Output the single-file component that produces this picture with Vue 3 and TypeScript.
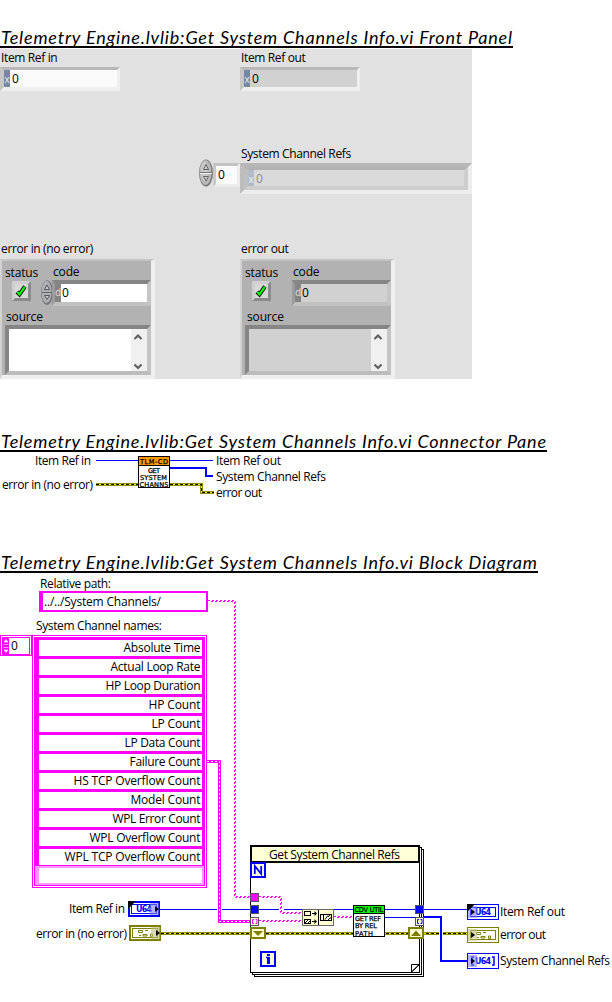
<script setup lang="ts">
interface Cluster { title: string; editable: boolean }
interface Label { x: number; y: number; w: number; text: string }
interface Wire { kind: 'ref' | 'thick' | 'str' | 'arr' | 'err'; d: string }
interface Terminal { x: number; y: number; kind: 'U64' | '[U64]' | 'err'; input: boolean; corner: boolean }

const prefix = 'Telemetry Engine.lvlib:Get System Channels Info.vi '
const headings = [
  { text: prefix + 'Front Panel', width: 512 },
  { text: prefix + 'Connector Pane', width: 546 },
  { text: prefix + 'Block Diagram', width: 537 },
]

const clusters: Cluster[] = [
  { title: 'error in (no error)', editable: true },
  { title: 'error out', editable: false },
]

const paneWires: Wire[] = [
  { kind: 'ref', d: 'M96 8.5H213' },
  { kind: 'thick', d: 'M170 16H206V24H213' },
  { kind: 'err', d: 'M96 32.5H138' },
  { kind: 'err', d: 'M170 32.5H201.5V40.5H214' },
]
const paneLabels: Label[] = [
  { x: 35, y: 13, w: 56, text: 'Item Ref in' },
  { x: 2, y: 37, w: 91, text: 'error in (no error)' },
  { x: 216, y: 13, w: 65, text: 'Item Ref out' },
  { x: 216, y: 29, w: 110, text: 'System Channel Refs' },
  { x: 216, y: 45, w: 46, text: 'error out' },
]

const channels = [
  { text: 'Absolute Time', w: 77 },
  { text: 'Actual Loop Rate', w: 90 },
  { text: 'HP Loop Duration', w: 95 },
  { text: 'HP Count', w: 52 },
  { text: 'LP Count', w: 49 },
  { text: 'LP Data Count', w: 76 },
  { text: 'Failure Count', w: 71 },
  { text: 'HS TCP Overflow Count', w: 127 },
  { text: 'Model Count', w: 70 },
  { text: 'WPL Error Count', w: 88 },
  { text: 'WPL Overflow Count', w: 111 },
  { text: 'WPL TCP Overflow Count', w: 136 },
]

const wires: Wire[] = [
  { kind: 'str', d: 'M208 27.5H234.5V323.5H250' },
  { kind: 'arr', d: 'M207 188.5H219.5V348.5H250' },
  { kind: 'ref', d: 'M160 336.5H217M222 336.5H279M284 336.5H468' },
  { kind: 'ref', d: 'M385 344.5H415' },
  { kind: 'thick', d: 'M424 344H441V388H467' },
  { kind: 'str', d: 'M259 323.5H280.5V339.5H302' },
  { kind: 'str', d: 'M259 347.5H302' },
  { kind: 'str', d: 'M334 343.5H353' },
  { kind: 'err', d: 'M161 360.5H439' },
  { kind: 'err', d: 'M443 360.5H467' },
]
const labels: Label[] = [
  { x: 40, y: 14.5, w: 71, text: 'Relative path:' },
  { x: 44, y: 32.5, w: 117, text: '../../System Channels/' },
  { x: 36, y: 57, w: 126, text: 'System Channel names:' },
  { x: 11, y: 77, w: 6, text: '0' },
  { x: 69, y: 340, w: 56, text: 'Item Ref in' },
  { x: 36, y: 365, w: 91, text: 'error in (no error)' },
  { x: 500, y: 343, w: 65, text: 'Item Ref out' },
  { x: 500, y: 366, w: 46, text: 'error out' },
  { x: 500, y: 392, w: 110, text: 'System Channel Refs' },
]
const terminals: Terminal[] = [
  { x: 128, y: 328, kind: 'U64', input: true, corner: true },
  { x: 129, y: 352, kind: 'err', input: true, corner: false },
  { x: 467, y: 331, kind: 'U64', input: false, corner: true },
  { x: 467, y: 354, kind: 'err', input: false, corner: false },
  { x: 467, y: 380, kind: '[U64]', input: false, corner: false },
]
</script>

<template>
  <main class="doc">
    <h2 class="heading first">
      <svg width="560" height="22"><text x="1" y="20" :textLength="headings[0].width - 1">{{ headings[0].text }}</text></svg>
      <span class="rule" :style="{ width: headings[0].width + 1 + 'px' }"></span>
    </h2>

    <section class="panel">
      <div class="field">
        <label>Item Ref in</label>
        <div class="num"><i>x</i><b>0</b></div>
      </div>
      <div class="field">
        <label>Item Ref out</label>
        <div class="num ro"><i>x</i><b>0</b></div>
      </div>
      <div class="array">
        <svg class="spin" width="14" height="28" viewBox="0 0 14 28">
          <ellipse cx="7" cy="14" rx="7" ry="13.5" fill="#777" /><ellipse cx="6.5" cy="13.5" rx="6" ry="12.5" fill="#b9b9b9" />
          <ellipse cx="5.5" cy="12.5" rx="3.5" ry="10" fill="#c8c8c8" /><path d="M1 13.5H13" stroke="#777" /><path d="M1 14.5H13" stroke="#eee" />
          <path d="M4.500 10.500L7 5.500L9.500 10.500Z M4.500 17.500H9.500L7 22Z" fill="#ccc" stroke="#666" />
        </svg>
        <div class="idx"><b>0</b></div>
        <div class="field">
          <label>System Channel Refs</label>
          <div class="shell"><div class="num dim"><i>x</i><b>0</b></div></div>
        </div>
      </div>
      <div v-for="c in clusters" :key="c.title" class="field last">
        <label>{{ c.title }}</label>
        <div class="cluster" :class="{ out: !c.editable }">
          <div class="top">
            <div class="status">
              <label>status</label>
              <div class="led">
                <svg width="13" height="14" viewBox="0 0 13 14"><path d="M2 8L4.500 10.500L10 2.500" fill="none" stroke="#111" stroke-width="4" /><path d="M2.200 8L4.500 10.300L9.800 2.800" fill="none" stroke="#0f0" stroke-width="2.200" /></svg>
              </div>
            </div>
            <div class="code">
              <label>code</label>
              <div class="row">
                <svg v-if="c.editable" class="cspin" width="12" height="25" viewBox="0 0 12 25">
                  <ellipse cx="6" cy="12.500" rx="6" ry="12.300" fill="#73757d" /><ellipse cx="5.500" cy="12" rx="5" ry="11.300" fill="#adafb5" />
                  <path d="M1 12.500H11" stroke="#666" /><path d="M3.500 9.500L6 5L8.500 9.500Z M3.500 15.500H8.500L6 19.500Z" fill="#ccc" stroke="#555" />
                </svg>
                <div class="codebox"><i>d</i><b>0</b></div>
              </div>
            </div>
          </div>
          <label class="src">source</label>
          <div class="string">
            <div class="bar">
              <svg width="16" height="42" viewBox="0 0 16 42"><path d="M3.500 10L7 6.500L10.500 10M3.500 35.500L7 39L10.500 35.500" fill="none" stroke="#606060" stroke-width="2.200" /></svg>
            </div>
          </div>
        </div>
      </div>
    </section>

    <h2 class="heading second">
      <svg width="560" height="22"><text x="1" y="20" :textLength="headings[1].width - 1">{{ headings[1].text }}</text></svg>
      <span class="rule" :style="{ width: headings[1].width + 1 + 'px' }"></span>
    </h2>

    <svg class="pane" width="612" height="50" viewBox="0 0 612 50">
      <g v-for="w in paneWires" :key="w.d" :class="w.kind">
        <path :d="w.d" class="w1" /><path :d="w.d" class="core" /><path :d="w.d" class="w2" />
      </g>
      <text v-for="l in paneLabels" :key="l.text" :x="l.x" :y="l.y" :textLength="l.w">{{ l.text }}</text>
      <g class="vi">
        <rect x="138.500" y="4.500" width="31" height="31" fill="#fff" stroke="#000" />
        <rect x="139" y="5" width="30" height="8" fill="#ff9900" /><path d="M139 13.500H169" stroke="#000" />
        <text x="140" y="11.800" textLength="28">TLM-CD</text>
        <text x="148" y="20.500" textLength="12">GET</text>
        <text x="140" y="27.500" textLength="27">SYSTEM</text>
        <text x="139.500" y="34.500" textLength="29">CHANNS</text>
      </g>
    </svg>

    <h2 class="heading third">
      <svg width="560" height="22"><text x="1" y="20" :textLength="headings[2].width - 1">{{ headings[2].text }}</text></svg>
      <span class="rule" :style="{ width: headings[2].width + 1 + 'px' }"></span>
    </h2>

    <svg class="diagram" width="612" height="429" viewBox="0 0 612 429">
      <!-- string constant -->
      <rect x="39" y="18" width="169" height="21" fill="#f0f" /><rect x="43" y="20" width="163" height="17" fill="#fff" />

      <!-- array constant -->
      <rect x="0.500" y="62.500" width="31" height="20" fill="#fff" stroke="#f0f" />
      <rect x="2.500" y="64.500" width="27" height="17" fill="#fff" stroke="#f0f" />
      <rect x="3" y="65" width="6" height="16" fill="#f0f" />
      <path d="M6 66.500L8 69H4ZM6 79.500L8 77H4ZM3.500 71.500H8.500M3.500 74.500H8.500" fill="#fff" stroke="#fff" stroke-width=".6" />
      <rect x="32.500" y="62.500" width="174" height="252" fill="#fff" stroke="#f0f" />
      <rect x="34" y="64" width="171" height="249" fill="#f0f" />
      <g v-for="(c, i) in channels" :key="c.text">
        <rect x="39" :y="67 + i * 19" width="163" height="16" fill="#fff" />
        <text :x="200.5 - c.w" :y="79 + i * 19" :textLength="c.w">{{ c.text }}</text>
      </g>
      <rect x="35" y="293" width="169" height="19" fill="#ff99ff" /><rect x="39" y="295" width="163" height="15" fill="#fff" />

      <!-- loop frame -->
      <rect x="254.500" y="276.500" width="169" height="127" fill="#fff" stroke="#000" />
      <rect x="252.500" y="274.500" width="169" height="127" fill="#fff" stroke="#000" />
      <rect x="250.500" y="272.500" width="169" height="127" fill="#fff" stroke="#000" />
      <rect x="251" y="273" width="168" height="16" fill="#ffffd8" stroke="#000" stroke-width="2" />
      <text x="269" y="286" textLength="131">Get System Channel Refs</text>
      <path d="M411.500 399V391.500H419.500ZM411.500 399L419 391.500" fill="#fff" stroke="#000" />

      <g v-for="w in wires" :key="w.d" :class="w.kind">
        <path :d="w.d" class="w1" /><path :d="w.d" class="core" /><path :d="w.d" class="w2" />
      </g>
      <text v-for="l in labels" :key="l.text + l.y" :x="l.x" :y="l.y" :textLength="l.w">{{ l.text }}</text>

      <!-- count and iteration terminals -->
      <g fill="#ffffd8" stroke="#00f" stroke-width="2">
        <rect x="251" y="290" width="14" height="14" /><rect x="261" y="379" width="14" height="14" />
      </g>
      <path d="M254.800 301V293L261.200 301V293" fill="none" stroke="#00f" stroke-width="1.800" />
      <path d="M266 384.500H268.500V390" fill="none" stroke="#00f" stroke-width="1.500" /><rect x="267" y="384" width="3" height="7" fill="#00f" /><rect x="267" y="381" width="3" height="2" fill="#00f" />

      <!-- tunnels -->
      <g stroke="#555" fill="#ffffd8">
        <rect x="250.500" y="320.500" width="8" height="8" fill="#f0f" />
        <rect x="250.500" y="332.500" width="8" height="8" fill="#00f" />
        <rect x="250.500" y="344.500" width="8" height="8" />
        <rect x="415.500" y="332.500" width="8" height="8" fill="#00f" />
        <rect x="415.500" y="344.500" width="8" height="8" />
      </g>
      <path d="M254 346.500H252.500V350.500H254M255.500 346.500H257V350.500H255.500" fill="none" stroke="#f0f" />
      <path d="M419 346.500H417.500V350.500H419M420.500 346.500H422V350.500H420.500" fill="none" stroke="#00f" />
      <g fill="#ffffd8" stroke="#808000" stroke-width="2">
        <rect x="251" y="355" width="14" height="10" /><rect x="409" y="355" width="14" height="10" />
      </g>
      <path d="M253 358H263L258 363ZM411 363H421L416 357.500Z" fill="#808000" />

      <!-- build path over the paths array -->
      <rect x="302.500" y="336.500" width="31" height="16" fill="#ffffd0" stroke="#666" />
      <path d="M318.500 337V352" stroke="#000" />
      <g fill="none" stroke="#000">
        <rect x="304.500" y="338.500" width="6" height="4" /><rect x="304.500" y="346.500" width="6" height="4" /><path d="M305 350L308 347M308 350L311 347" />
        <path d="M312 340.500H316M312 348.500H316" /><path d="M314.500 338V343L317 340.500ZM314.500 346V351L317 348.500Z" fill="#000" stroke="none" />
        <rect x="320.500" y="341.500" width="11" height="6" /><path d="M323.500 342V347M325 346.500L328 342.500M328 347L330 345H331M328 344L331 341" />
      </g>

      <g class="vi">
        <rect x="353.500" y="332.500" width="31" height="31" fill="#fff" stroke="#000" />
        <rect x="354" y="333" width="30" height="7" fill="#0f0" /><path d="M354 340.500H384" stroke="#000" />
        <text x="354.500" y="339.300" textLength="29">CDV UTIL</text>
        <text x="355" y="347.500" textLength="26">GET REF</text>
        <text x="355" y="355.300" textLength="22">BY REL</text>
        <text x="355" y="363" textLength="18">PATH</text>
      </g>

      <!-- control and indicator terminals -->
      <g v-for="t in terminals" :key="t.x + '-' + t.y" :transform="`translate(${t.x} ${t.y})`" :class="t.kind === 'err' ? 'olive' : 'blue'">
        <rect :x="t.input ? 1 : 0.5" :y="t.input ? 1 : 0.5" :width="t.input ? 30 : 31" :height="t.input ? 14 : 15" fill="#fff" class="ln" :stroke-width="t.input ? 2 : 1" />
        <rect v-if="t.kind !== '[U64]'" x="3.500" y="3.500" width="25" height="9" fill="#fff" class="ln" />
        <path v-else d="M7 4H5V12H7M25 4H27V12H25" fill="none" class="ln" stroke-width="1.500" />
        <text v-if="t.kind !== 'err'" x="8" y="11" textLength="16">U64</text>
        <path v-else d="M9.500 5.500H13.500V7.500H9.500ZM16 5.500H19M14 9.500H18V11H14ZM10 10.500H12M21.500 9V11.500H23.500V9Z" fill="none" class="ln" />
        <rect :x="t.input ? 22 : 1" y="2" width="9" height="12" class="tint" />
        <path :d="t.input ? 'M27 5V11L31 8Z' : 'M4 5V11L8 8Z'" fill="#000" />
        <path v-if="t.corner" d="M0 0H8L0 8Z" fill="#000" />
      </g>
    </svg>
  </main>
</template>

<style>
body { background: #fff; }
</style>

<style scoped>
.doc { width: 612px; height: 1002px; overflow: hidden; background: #fff; font: 12px/16px "Open Sans", "Noto Sans", sans-serif; color: #000; display: flex; flex-direction: column; }
svg { display: block; flex: none; }
.heading { margin: 0; height: 24px; flex: none; display: flex; flex-direction: column; font-weight: 400; }
.heading text { font: italic 18px Lato, sans-serif; }
.rule { height: 2px; background: #000; }
.first { margin-top: 24px; }
.second { margin-top: 49px; }
.third { margin-top: 47px; }
.panel { margin-top: 1px; flex: none; width: 472px; height: 330px; background: #e1e1e1; display: grid; grid-template-columns: 240px 232px; grid-template-rows: 96px 96px 138px; }
label { display: block; height: 18px; line-height: 18px; padding-left: 1px; white-space: nowrap; letter-spacing: -.36px; }
.last > label { line-height: 16px; }
i, b { font-style: normal; font-weight: 400; }
.num { box-sizing: border-box; width: 120px; height: 24px; border: solid; border-width: 3px 3px 4px 4px; border-color: #b8b8b8 #efefef #efefef #c6c6c6; background: #fafafa; display: flex; line-height: 17px; gap: 2px; }
.num i { width: 6px; background: #7487a8; color: #eee; font-size: 10px; line-height: 18px; text-align: center; }
.ro { background: #d1d1d1; }
.array { grid-column: 1 / 3; padding-left: 199px; display: flex; }
.spin { margin-top: 14px; }
.idx { box-sizing: border-box; width: 27px; height: 24px; margin-top: 18px; padding-left: 2px; border: 3px solid; border-color: #c2c2c2 #ececec #ececec #c8c8c8; background: #fafafa; line-height: 18px; }
.shell { box-sizing: border-box; width: 232px; height: 31px; border: 4px solid; border-color: #b7b7b7 #ededed #ededed #bdbdbd; }
.dim { width: 224px; height: 23px; border-width: 3px 4px 4px 4px; border-color: #b3b3b3 #cdcdcd #cecece #bfbfbf; background: #dadada; color: #8c8c8c; }
.dim i { background: #b3bbc8; }
.cluster { box-sizing: border-box; width: 155px; height: 120px; border: solid; border-width: 2px 4px 4px 2px; border-color: #c4c4c4 #eee #eee #d2d2d2; background: #b2b2b2; }
.top { display: flex; height: 46px; }
.status { width: 38px; padding: 3px 0 0 2px; }
.led { box-sizing: border-box; width: 19px; height: 20px; margin: -1px 0 0 8px; border: 3px solid; border-color: #cfcfcf #8b8b8b #8b8b8b #cfcfcf; background: #d8d8d8; display: flex; }
.code { padding-top: 2px; width: 112px; }
.code label { padding-left: 12px; }
.row { display: flex; margin-top: -1px; }
.cspin { margin: 0 -1px 0 0; }
.codebox { box-sizing: border-box; width: 99px; height: 26px; border: solid; border-width: 4px 4px 4px 3px; border-color: #858585 #c6c6c6 #c1c1c1 #9b9b9b; background: #fff; display: flex; gap: 1px; line-height: 17px; }
.codebox i { width: 6px; background: #858585; color: #ddd; font-size: 10px; line-height: 17px; text-align: center; }
.src { padding-left: 4px; line-height: 19px; letter-spacing: -.15px; }
.status label, .code label { letter-spacing: -.15px; }
.string { box-sizing: border-box; width: 146px; height: 50px; margin-left: 3px; border: 4px solid; border-color: #858585 #c4c4c4 #bcbcbc #858585; background: #fff; display: flex; justify-content: flex-end; }
.bar { width: 16px; background: #f0f0f0; }
.out .codebox { margin-left: 12px; background: #d1d1d1; }
.out .string { background: #d1d1d1; }
.out .code label { padding-left: 13px; }
.out .src { padding-left: 5px; }
.pane text, .diagram text { font: 12px "Open Sans", "Noto Sans", sans-serif; }
.pane .vi text, .diagram .vi text { font: 6.600px "DejaVu Sans", sans-serif; stroke: #000; stroke-width: .25; }
.w1, .w2, .core { fill: none; }
.ref .w1 { stroke: #00f; stroke-width: 1; }
.thick .w1 { stroke: #00f; stroke-width: 2; }
.str .w1 { stroke: #f0f; stroke-width: 1; stroke-dasharray: 2 2; }
.str .w2 { stroke: #f0f; stroke-width: 1; stroke-dasharray: 2 2; stroke-dashoffset: 2; transform: translate(1px, 1px); }
.arr .w1 { stroke: #f0f; stroke-width: 3; }
.arr .w2 { stroke: #fff; stroke-width: 1; stroke-dasharray: 2 2; }
.err .w1 { stroke: #8f8f00; stroke-width: 3; }
.err .core { stroke: #ffff00; stroke-width: 1; }
.err .w2 { stroke: #000; stroke-width: 1; stroke-dasharray: 3 2; }
.blue .ln { stroke: #00f; }
.olive .ln { stroke: #808000; }
.diagram .blue text { font: 700 8px "DejaVu Sans", sans-serif; fill: #00f; }
.blue .tint { fill: #8080ff; opacity: .6; }
.olive .tint { fill: #c0c080; opacity: .6; }
</style>
